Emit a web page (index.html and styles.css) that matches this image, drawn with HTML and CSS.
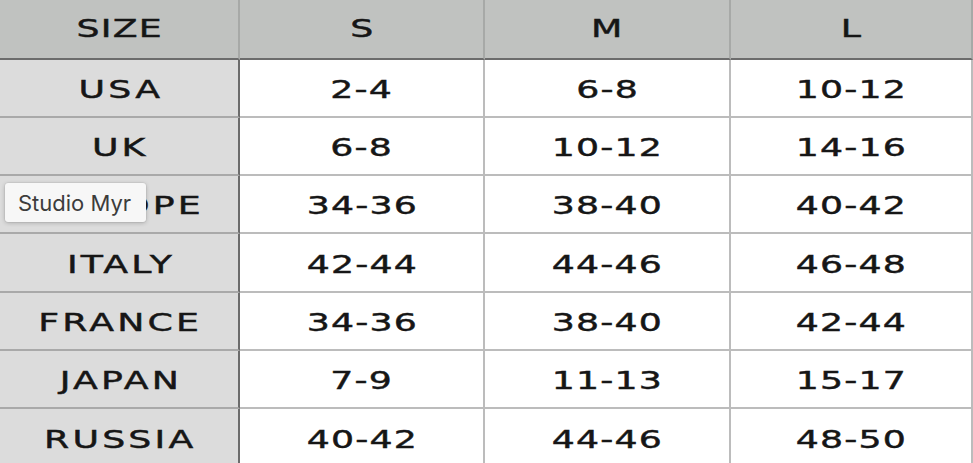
FILE: index.html
```html
<!DOCTYPE html>
<html lang="en">
<head>
<meta charset="utf-8">
<title>Size chart</title>
<link rel="stylesheet" href="styles.css">
</head>
<body>
<div class="chart">
  <div class="size-table">
    <div class="cell head label-col"><span class="t">SIZE</span></div>
    <div class="cell head"><span class="t">S</span></div>
    <div class="cell head"><span class="t">M</span></div>
    <div class="cell head"><span class="t">L</span></div>

    <div class="cell label"><span class="t">USA</span></div>
    <div class="cell"><span class="t">2-4</span></div>
    <div class="cell"><span class="t">6-8</span></div>
    <div class="cell"><span class="t">10-12</span></div>

    <div class="cell label"><span class="t">UK</span></div>
    <div class="cell"><span class="t">6-8</span></div>
    <div class="cell"><span class="t">10-12</span></div>
    <div class="cell"><span class="t">14-16</span></div>

    <div class="cell label"><span class="t">EUROPE</span></div>
    <div class="cell"><span class="t">34-36</span></div>
    <div class="cell"><span class="t">38-40</span></div>
    <div class="cell"><span class="t">40-42</span></div>

    <div class="cell label"><span class="t">ITALY</span></div>
    <div class="cell"><span class="t">42-44</span></div>
    <div class="cell"><span class="t">44-46</span></div>
    <div class="cell"><span class="t">46-48</span></div>

    <div class="cell label"><span class="t">FRANCE</span></div>
    <div class="cell"><span class="t">34-36</span></div>
    <div class="cell"><span class="t">38-40</span></div>
    <div class="cell"><span class="t">42-44</span></div>

    <div class="cell label"><span class="t">JAPAN</span></div>
    <div class="cell"><span class="t">7-9</span></div>
    <div class="cell"><span class="t">11-13</span></div>
    <div class="cell"><span class="t">15-17</span></div>

    <div class="cell label"><span class="t">RUSSIA</span></div>
    <div class="cell"><span class="t">40-42</span></div>
    <div class="cell"><span class="t">44-46</span></div>
    <div class="cell"><span class="t">48-50</span></div>
  </div>
  <div class="tooltip">Studio Myr</div>
</div>
</body>
</html>
```

FILE: styles.css
```css
html, body {
  margin: 0;
  padding: 0;
  overflow: hidden;
  background: #ffffff;
}

.chart {
  position: relative;
  width: 973px;
  height: 463px;
  overflow: hidden;
}

.size-table {
  display: grid;
  grid-template-columns: 240px 245px 246px 242px;
  grid-template-rows: 59.5px repeat(7, 58.33px);
}

.cell {
  box-sizing: border-box;
  display: flex;
  align-items: center;
  justify-content: center;
  padding-top: 3px;
  background: #ffffff;
  border-right: 2px solid #bcbcbc;
  border-bottom: 2px solid #bcbcbc;
  font-family: "DejaVu Sans", sans-serif;
  font-weight: 400;
  font-size: 25px;
  color: #161616;
}

.cell .t {
  display: inline-block;
  letter-spacing: 0.8px;
  padding-left: 0.8px;
  transform: scaleX(1.45);
  white-space: nowrap;
  -webkit-text-stroke: 0.45px #161616;
}

.head {
  padding-top: 0;
  background: #c0c2c0;
  border-right-color: #a7a9a7;
  border-bottom-color: #6c6c6c;
}

.label {
  background: #dcdcdc;
  border-right-color: #6c6c6c;
  border-bottom-color: #a9a9a9;
}

.label .t {
  letter-spacing: 2.2px;
  padding-left: 2.2px;
}

.tooltip {
  position: absolute;
  left: 5px;
  top: 183px;
  box-sizing: border-box;
  width: 141px;
  height: 39px;
  padding-left: 13px;
  display: flex;
  align-items: center;
  background: #f7f7f7;
  border-radius: 3px;
  box-shadow: 0 1px 4px rgba(0, 0, 0, 0.22), 0 0 0 0.5px rgba(0, 0, 0, 0.08);
  font-family: "Inter", "Noto Sans", sans-serif;
  font-size: 22px;
  color: #3c3c3c;
  white-space: nowrap;
}
```
